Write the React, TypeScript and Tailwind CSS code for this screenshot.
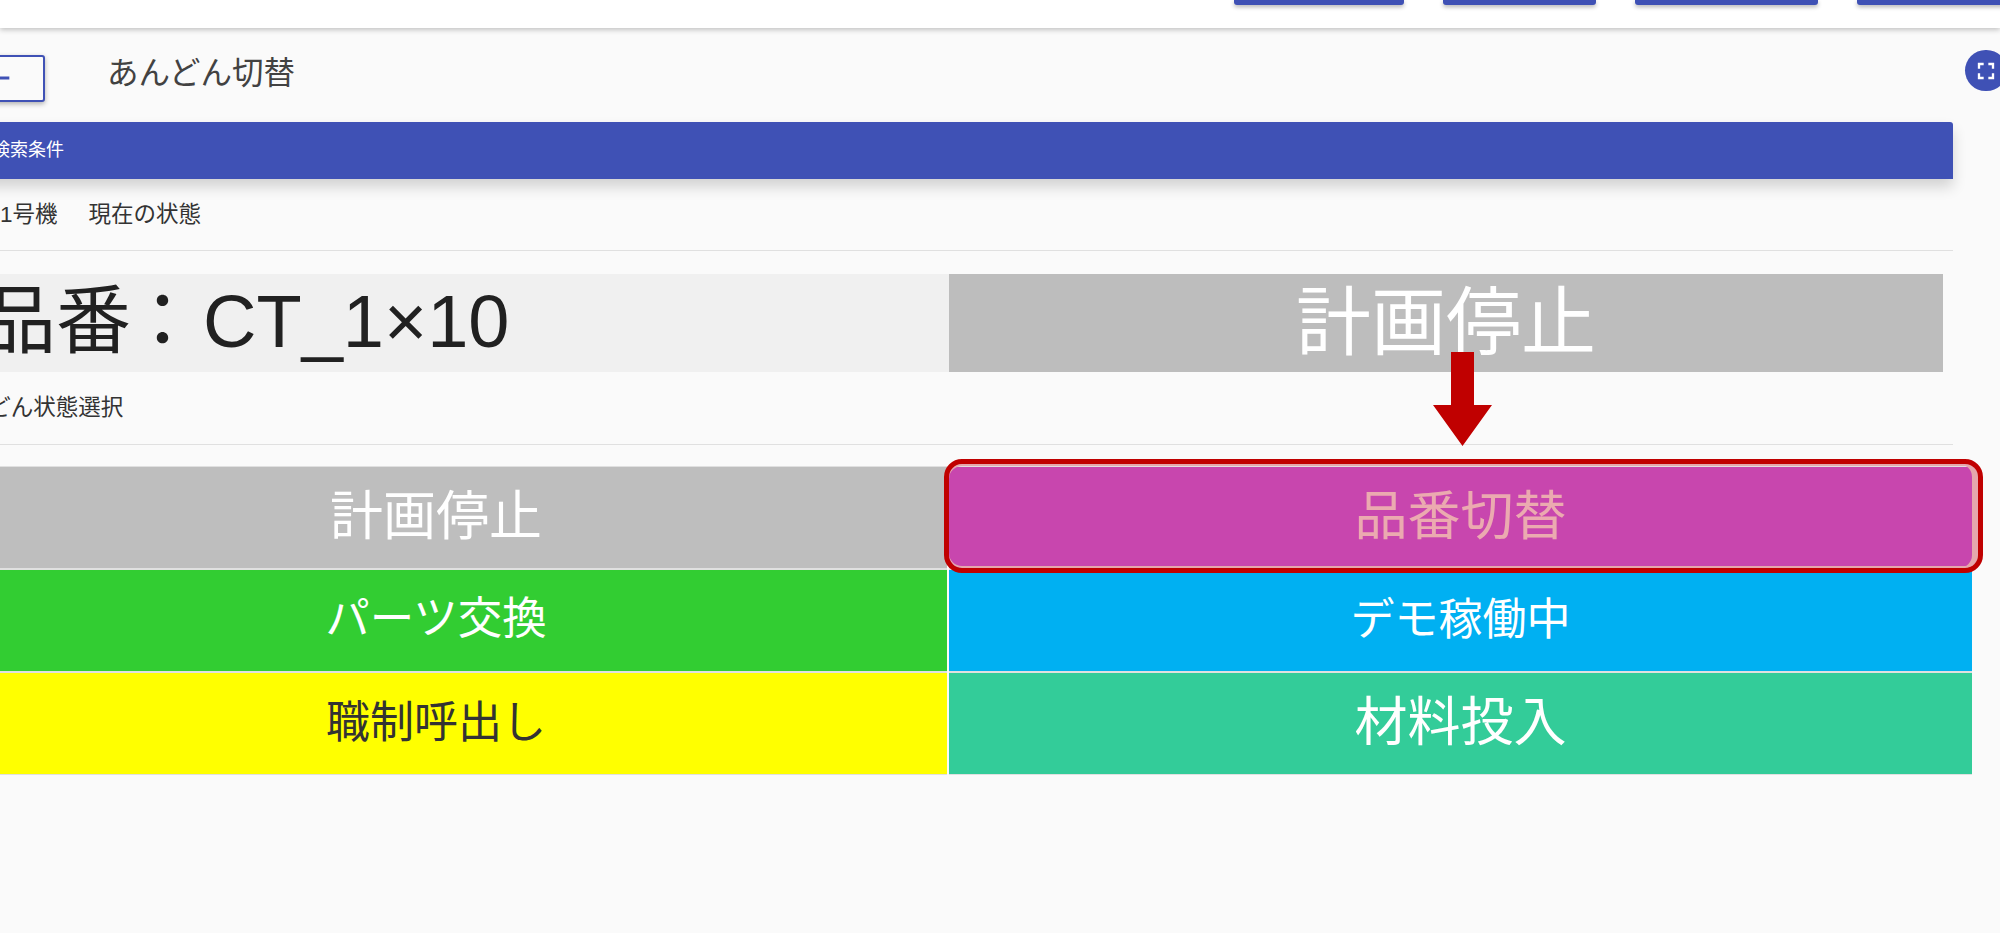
const JP = "font-['Liberation_Sans','Noto_Sans_CJK_JP',sans-serif]";

function Cell({ label, bg, color, size }: { label: string; bg: string; color: string; size: string }) {
  return (
    <div className={`flex h-[103px] items-center justify-center border-y border-[#e0e0e0] pb-[2px] ${bg} ${color} ${size}`}>
      {label}
    </div>
  );
}

export default function App() {
  return (
    <div className={`relative h-[933px] w-[2000px] overflow-hidden bg-[#fafafa] text-[#212121] ${JP}`}>
      <header className="flex h-[28px] items-start gap-[39px] bg-white pl-[1234px] shadow-[0_2px_5px_rgba(0,0,0,0.22)]">
        <div className="h-[5px] w-[170px] shrink-0 rounded-b-[3px] bg-[#3f51b5] shadow-[0_2px_4px_rgba(0,0,0,0.3)]" />
        <div className="h-[5px] w-[153px] shrink-0 rounded-b-[3px] bg-[#3f51b5] shadow-[0_2px_4px_rgba(0,0,0,0.3)]" />
        <div className="h-[5px] w-[183px] shrink-0 rounded-b-[3px] bg-[#3f51b5] shadow-[0_2px_4px_rgba(0,0,0,0.3)]" />
        <div className="h-[5px] w-[170px] shrink-0 rounded-b-[3px] bg-[#3f51b5] shadow-[0_2px_4px_rgba(0,0,0,0.3)]" />
      </header>

      <main className="ml-[-75px] w-[2028px]">
        <div className="flex h-[94px] items-start">
          <div className="ml-[31px] mt-[27px] flex h-[47px] w-[89px] items-center justify-center rounded-[3px] border-2 border-[#3f51b5] bg-[#fafafa] shadow-[0_2px_5px_rgba(0,0,0,0.3)]">
            <svg viewBox="0 0 24 24" className="mb-[2px] mr-[6px] h-[34px] w-[34px] shrink-0 fill-[#3f51b5]">
              <path d="M20 11H7.83l5.59-5.59L12 4l-8 8 8 8 1.41-1.41L7.83 13H20v-2z" />
            </svg>
          </div>
          <h1 className="ml-[62px] mt-[26px] text-[31.5px] leading-[38px] text-[#424242]">あんどん切替</h1>
        </div>

        <div className="flex h-[57px] items-center rounded-t-[3px] bg-[#3f51b5] pl-[67px] text-[18px] text-white shadow-[0_8px_14px_rgba(0,0,0,0.16)]">
          検索条件
        </div>

        <div className="flex h-[72px] items-center gap-[31px] border-b border-[#e0e0e0] pl-[75px] text-[22.5px] text-[#333333]">
          <span>1号機</span>
          <span>現在の状態</span>
        </div>

        <div className="mt-[23px] flex h-[98px] w-[2018px]">
          <div className="flex w-[1024px] items-center bg-[#f0f0f0] pb-[4px] pl-[56px] text-[75px] text-[#212121]">
            <span>品番</span>
            <span className="-ml-[6px] mr-[3px]">：</span>
            <span className="text-[74px]">CT_1×10</span>
          </div>
          <div className="flex flex-1 items-center justify-center bg-[#bdbdbd] text-[75px] text-white">計画停止</div>
        </div>

        <div className="flex h-[73px] items-center border-b border-[#e0e0e0] pl-[19px] text-[22.5px] text-[#333333]">
          <span>あんどん状態選択</span>
        </div>

        <div className="mt-[21px] grid w-[2047px] grid-cols-[1022px_1023px] gap-x-[2px]">
          <Cell label="計画停止" bg="bg-[#bebebe]" color="text-white" size="text-[53px]" />
          <Cell label="品番切替" bg="bg-[#c846ae]" color="text-[#ebaab0]" size="text-[53px]" />
          <Cell label="パーツ交換" bg="bg-[#32cd32]" color="text-white" size="text-[44.5px]" />
          <Cell label="デモ稼働中" bg="bg-[#00b0f2]" color="text-white" size="text-[44px]" />
          <Cell label="職制呼出し" bg="bg-[#ffff00]" color="text-[#333333]" size="text-[44px]" />
          <Cell label="材料投入" bg="bg-[#33cc99]" color="text-white" size="text-[53px]" />
        </div>
      </main>

      <button className="absolute left-[1965px] top-[50px] flex h-[41px] w-[42px] items-center justify-center rounded-full bg-[#3f51b5]">
        <svg viewBox="0 0 24 24" className="h-[28px] w-[28px] fill-white">
          <path d="M7 14H5v5h5v-2H7v-3zm-2-4h2V7h3V5H5v5zm12 7h-3v2h5v-5h-2v3zM14 5v2h3v3h2V5h-5z" />
        </svg>
      </button>

      <svg viewBox="0 0 59 94" className="absolute left-[1433px] top-[352px] h-[94px] w-[59px] fill-[#c00000]">
        <path d="M18 0H41V53H59L29.5 94L0 53H18Z" />
      </svg>

      <div className="absolute left-[944px] top-[459px] h-[114px] w-[1039px] rounded-[18px] border-[5px] border-[#c00000] shadow-[inset_0_2px_0_#e5a7ad,inset_0_-2px_0_#e5a7ad,inset_-6px_0_0_#e5a7ad]" />
    </div>
  );
}
